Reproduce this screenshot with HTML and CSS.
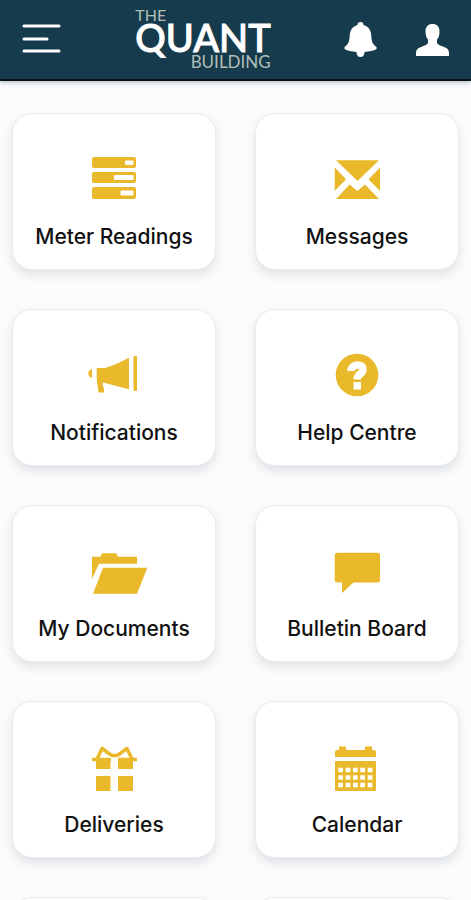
FILE: index.html
```
<!DOCTYPE html>
<html lang="en">

<head>
    <meta charset="UTF-8">
    <meta name="viewport" content="width=device-width, initial-scale=1.0">
    <title>The Quant Building</title>
    <link rel="stylesheet" href="styles.css">
</head>

<body>

    <header class="topbar">
        <button type="button" class="icon-button" aria-label="Menu">
            <svg width="40" height="34" viewBox="0 0 40 34">
                <path d="M2 3H37M2 16H25M2 28H37" fill="none" stroke="#fff" stroke-width="3" stroke-linecap="round"/>
            </svg>
        </button>

        <a href="#" class="logo">
            <span class="logo-the">THE</span>
            <span class="logo-name">QUANT</span>
            <span class="logo-building">BUILDING</span>
        </a>

        <div class="actions">
            <button type="button" class="icon-button" aria-label="Alerts">
                <svg width="33" height="36" viewBox="0 0 33 36">
                    <path fill="#fff" d="M16.5 0c2 0 3 1 3 3 5 1.5 7.500 5 7.800 11 .4 6 1.200 8 5.200 11v2c-3 1.800-7 2.600-12 3 0 3-1.500 5-4 5s-4-2-4-5c-5-.4-9-1.200-12-3v-2c4-3 4.800-5 5.200-11 .3-6 2.800-9.500 7.800-11 0-2 1-3 3-3z"/>
                </svg>
            </button>
            <button type="button" class="icon-button" aria-label="Profile">
                <svg width="33" height="32" viewBox="0 0 33 32">
                    <path fill="#fff" d="M16.5 0c4.500 0 7 2.600 7 7.500 0 4-1 6.500-2.500 8v3.500c1 2 3.500 2.600 7 4 3.500 1.300 5 3 5 6v3H0v-3c0-3 1.500-4.700 5-6 3.500-1.400 6-2 7-4v-3.500c-1.500-1.500-2.500-4-2.500-8 0-4.900 2.500-7.500 7-7.500z"/>
                </svg>
            </button>
        </div>
    </header>

    <main class="tiles">
        <a href="#" class="tile">
            <svg class="tile-icon" viewBox="0 0 60 60">
                <rect x="8" y="8" width="44" height="11" rx="2"/>
                <rect x="8" y="23" width="44" height="11" rx="2"/>
                <rect x="8" y="38" width="44" height="12" rx="2"/>
                <g fill="#fff">
                    <rect x="41" y="11.500" width="8.500" height="4.500" rx="1"/>
                    <rect x="30" y="26" width="19.500" height="5" rx="1"/>
                    <rect x="36.500" y="41.500" width="13" height="5" rx="1"/>
                </g>
            </svg>
            <span>Meter Readings</span>
        </a>

        <a href="#" class="tile">
            <svg class="tile-icon" viewBox="0 0 60 60">
                <path d="M9 11.300H52L30.500 32zM7.700 18.500V42L19 30.300zM53 18.500V42L41.500 30.300zM9 50L22.700 35.500 30.300 42 38 35.500 52 50z"/>
            </svg>
            <span>Messages</span>
        </a>

        <a href="#" class="tile">
            <svg class="tile-icon" viewBox="0 0 60 60">
                <path d="M8 24v9c-5-1-5-8 0-9z"/>
                <path d="M12.700 23H21C29 20.500 37 17 45 12.700V44.300L19 37.500c-1.200 3 1 4.500 1 6.500v3.500h-5.500C14 42 12.700 38 12.700 33z"/>
                <rect x="49.500" y="11" width="3.500" height="35" rx="1"/>
            </svg>
            <span>Notifications</span>
        </a>

        <a href="#" class="tile">
            <svg class="tile-icon" viewBox="0 0 60 60">
                <circle cx="30" cy="30" r="21.300"/>
                <path d="M24 26c0-7.500 12-8 12-1.500 0 4.500-5.500 4-6 10" fill="none" stroke="#fff" stroke-width="7.500"/>
                <rect x="26.500" y="37" width="7.500" height="7.500" fill="#fff"/>
            </svg>
            <span>Help Centre</span>
        </a>

        <a href="#" class="tile">
            <svg class="tile-icon" viewBox="0 0 60 60">
                <path d="M8 15.700h8.300l2-3.400H32l2.300 3.400H53v7H15L8 38zM19 26.700H63.300L53 52.700H9z"/>
            </svg>
            <span>My Documents</span>
        </a>

        <a href="#" class="tile">
            <svg class="tile-icon" viewBox="0 0 60 60">
                <path d="M10 11.700H50.500a2.500 2.500 0 0 1 2.500 2.500V39a2.500 2.500 0 0 1-2.500 2.500H26.500L15 52V41.500H10.200A2.500 2.500 0 0 1 7.700 39V14.200A2.500 2.500 0 0 1 10 11.700z"/>
            </svg>
            <span>Bulletin Board</span>
        </a>

        <a href="#" class="tile">
            <svg class="tile-icon" viewBox="0 0 60 60">
                <path d="M12 39H26.500V54H12zM34 39H49V54H34zM12 22H26.500V32H12zM34 22H49V32H34z"/>
                <path d="M8 22.500H27M34 22.500H53M13 22L18 11.500C21 12.500 25 18.700 30.500 18.700S40 12.500 43 11.500L48 22" fill="none" stroke="#e9b92b" stroke-width="3.500" stroke-linejoin="round"/>
            </svg>
            <span>Deliveries</span>
        </a>

        <a href="#" class="tile">
            <svg class="tile-icon" viewBox="0 0 60 60">
                <path d="M8 20V15a2 2 0 0 1 2-2h2V9.500h7V13H38V9.500h7V13h2a2 2 0 0 1 2 2v5z"/>
                <rect x="8" y="24" width="41" height="30" rx="1"/>
                <path d="M11.300 33H16M18.700 33H23.400M26 33H30.700M33.300 33H38M40.700 33H45.400M11.300 40.500H16M18.700 40.500H23.400M26 40.500H30.700M33.300 40.500H38M40.700 40.500H45.400M11.300 48H16M18.700 48H23.400M26 48H30.700M33.300 48H38M40.700 48H45.400" stroke="#fff" stroke-width="4.700"/>
            </svg>
            <span>Calendar</span>
        </a>

        <div class="tile"></div>
        <div class="tile"></div>
    </main>

</body>

</html>
```
FILE: styles.css
```
* {
    box-sizing: border-box;
}

body {
    display: flex;
    flex-direction: column;
    margin: 0;
    height: 100vh;
    font-family: Inter, sans-serif;
    background-color: #fafbfc;
    color: #111;
}

.topbar {
    position: relative;
    z-index: 1;
    flex: none;
    display: flex;
    align-items: center;
    padding: 8px 22px 7px;
    background-color: #153b4c;
    border-bottom: 2px solid #05151d;
    box-shadow: 0 1px 5px rgba(0, 0, 0, 0.3);
}

.icon-button {
    display: flex;
    padding: 0;
    border: 0;
    background: none;
}

.logo {
    display: flex;
    flex-direction: column;
    margin: 0 auto;
    font-family: Lato, sans-serif;
    color: #fff;
    text-decoration: none;
}

.logo-the {
    font-size: 16px;
    line-height: 14px;
    color: #b3beb8;
}

.logo-name {
    font-size: 38px;
    font-weight: 500;
    line-height: 30px;
    -webkit-text-stroke: 1px #fff;
}

.logo-building {
    align-self: flex-end;
    font-size: 17px;
    line-height: 20px;
    color: #b3beb8;
}

.actions {
    display: flex;
    align-items: center;
    gap: 39px;
}

.tiles {
    flex: 1;
    display: grid;
    grid-template-columns: 1fr 1fr;
    gap: 39px;
    padding: 32px 12px;
    overflow-y: auto;
    scrollbar-width: none;
}

.tile {
    display: flex;
    flex-direction: column;
    align-items: center;
    gap: 16px;
    min-height: 157px;
    padding: 35px 8px 20px;
    background-color: #fff;
    border: 1px solid #e9ebed;
    border-radius: 20px;
    box-shadow: 0 5px 10px rgba(40, 60, 70, 0.12);
    font-size: 21px;
    font-weight: 500;
    line-height: 24px;
    color: inherit;
    text-decoration: none;
    white-space: nowrap;
}

.tile-icon {
    width: 60px;
    height: 60px;
    overflow: visible;
    fill: #e9b92b;
}
```
